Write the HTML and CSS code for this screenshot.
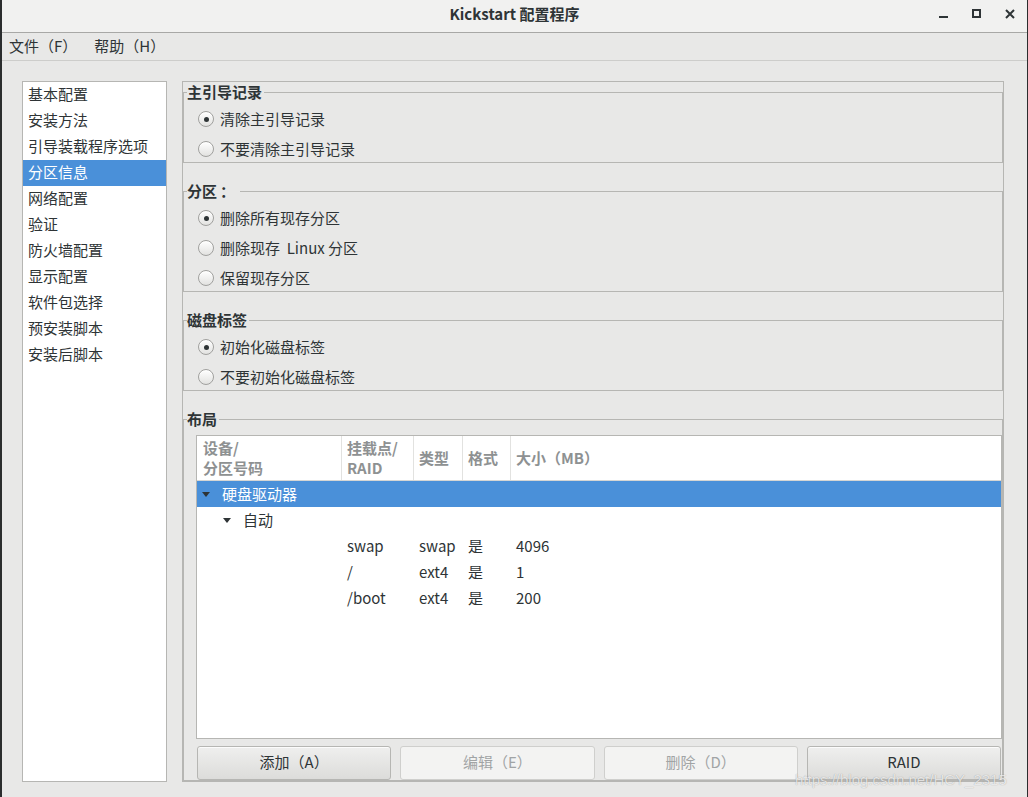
FILE: index.html
```html
<!DOCTYPE html>
<html lang="zh-CN">
<head>
<meta charset="utf-8">
<title>Kickstart 配置程序</title>
<link rel="stylesheet" href="styles.css">
</head>
<body>
<div class="window">
  <header class="titlebar">
    <div class="title">Kickstart 配置程序</div>
    <div class="controls">
      <svg class="ctl min" width="10" height="10" viewBox="0 0 10 10"><rect x="0" y="6" width="9" height="2" fill="#2e3436"/></svg>
      <svg class="ctl max" width="10" height="10" viewBox="0 0 10 10"><rect x="1" y="1" width="7" height="7" fill="none" stroke="#2e3436" stroke-width="2"/></svg>
      <svg class="ctl close" width="10" height="10" viewBox="0 0 10 10"><path d="M1 1 L9 9 M9 1 L1 9" stroke="#2e3436" stroke-width="2"/></svg>
    </div>
  </header>
  <nav class="menubar">
    <span class="menu">文件（F）</span>
    <span class="menu">帮助（H）</span>
  </nav>
  <main class="content">
    <ul class="sidebar">
      <li>基本配置</li>
      <li>安装方法</li>
      <li>引导装载程序选项</li>
      <li class="selected">分区信息</li>
      <li>网络配置</li>
      <li>验证</li>
      <li>防火墙配置</li>
      <li>显示配置</li>
      <li>软件包选择</li>
      <li>预安装脚本</li>
      <li>安装后脚本</li>
    </ul>
    <div class="panel">
      <fieldset class="group">
        <legend>主引导记录</legend>
        <div class="options">
          <label class="option"><span class="radio checked"></span>清除主引导记录</label>
          <label class="option"><span class="radio"></span>不要清除主引导记录</label>
        </div>
      </fieldset>
      <fieldset class="group">
        <legend>分区<span class="colon">：</span></legend>
        <div class="options">
          <label class="option"><span class="radio checked"></span>删除所有现存分区</label>
          <label class="option"><span class="radio"></span>删除现存&nbsp; Linux 分区</label>
          <label class="option"><span class="radio"></span>保留现存分区</label>
        </div>
      </fieldset>
      <fieldset class="group">
        <legend>磁盘标签</legend>
        <div class="options">
          <label class="option"><span class="radio checked"></span>初始化磁盘标签</label>
          <label class="option"><span class="radio"></span>不要初始化磁盘标签</label>
        </div>
      </fieldset>
      <fieldset class="group layout">
        <legend>布局</legend>
        <div class="tree">
          <div class="tree-head">
            <div class="th">设备/<br>分区号码</div>
            <div class="th">挂载点/<br>RAID</div>
            <div class="th">类型</div>
            <div class="th">格式</div>
            <div class="th last">大小（MB）</div>
          </div>
          <div class="tree-row selected">
            <div class="cell first depth0"><span class="expander"></span>硬盘驱动器</div>
          </div>
          <div class="tree-row">
            <div class="cell first depth1"><span class="expander"></span>自动</div>
          </div>
          <div class="tree-row">
            <div class="cell first"></div>
            <div class="cell">swap</div>
            <div class="cell">swap</div>
            <div class="cell">是</div>
            <div class="cell">4096</div>
          </div>
          <div class="tree-row">
            <div class="cell first"></div>
            <div class="cell">/</div>
            <div class="cell">ext4</div>
            <div class="cell">是</div>
            <div class="cell">1</div>
          </div>
          <div class="tree-row">
            <div class="cell first"></div>
            <div class="cell">/boot</div>
            <div class="cell">ext4</div>
            <div class="cell">是</div>
            <div class="cell">200</div>
          </div>
        </div>
        <div class="buttons">
          <button class="btn">添加（A）</button>
          <button class="btn" disabled>编辑（E）</button>
          <button class="btn" disabled>删除（D）</button>
          <button class="btn">RAID</button>
        </div>
      </fieldset>
    </div>
  </main>
  <div class="watermark">https://blog.csdn.net/HCY_2315</div>
</div>
</body>
</html>
```

FILE: styles.css
```css
* { box-sizing: border-box; }

html, body {
  margin: 0;
  padding: 0;
}

body {
  width: 1028px;
  height: 797px;
  overflow: hidden;
  font-family: "Noto Sans CJK SC", "Noto Sans", sans-serif;
  font-size: 15px;
  color: #2e3436;
  background: #e8e8e7;
}

.window {
  position: relative;
  width: 1028px;
  height: 797px;
  border-left: 2px solid #2b2d2e;
  border-right: 1px solid #2b2d2e;
  background: #e8e8e7;
  display: flex;
  flex-direction: column;
}

/* title bar */
.titlebar {
  position: relative;
  height: 33px;
  flex: none;
  background: #f1f1f0;
  border-bottom: 1px solid #a8a8a6;
  display: flex;
  align-items: center;
  justify-content: center;
}

.title {
  font-weight: bold;
  font-size: 15px;
  line-height: 18px;
  margin-top: -4px;
  color: #2e3436;
}

.controls {
  position: absolute;
  right: 0;
  top: 0;
  height: 32px;
}

.ctl {
  position: absolute;
  display: block;
}
.ctl.min { left: -88px; top: 10px; }
.ctl.max { left: -55px; top: 9px; }
.ctl.close { left: -22px; top: 9px; }

/* menu bar */
.menubar {
  height: 28px;
  flex: none;
  border-bottom: 1px solid #cdcdcb;
  display: flex;
  align-items: center;
  gap: 17px;
  padding-left: 7px;
  padding-bottom: 1px;
  line-height: 18px;
}

/* content */
.content {
  flex: 1;
  display: flex;
  gap: 15px;
  padding: 20px 23px 15px 20px;
  min-height: 0;
}

.sidebar {
  width: 145px;
  flex: none;
  margin: 0;
  padding: 0;
  list-style: none;
  background: #ffffff;
  border: 1px solid #b6b6b3;
}

.sidebar li {
  height: 26px;
  line-height: 24px;
  padding-left: 5px;
  white-space: nowrap;
}

.sidebar li.selected {
  background: #4a90d9;
  color: #ffffff;
}

/* right panel */
.panel {
  flex: 1;
  border: 1px solid #b6b6b3;
  display: flex;
  flex-direction: column;
  padding-top: 2px;
  min-width: 0;
}

.group {
  margin: 0;
  padding: 0;
  border: 1px solid #b6b6b3;
  min-width: 0;
  flex: none;
}

.group + .group {
  margin-top: 20px;
}

.group legend {
  font-weight: bold;
  line-height: 16px;
  height: 16px;
  padding: 0 2px 0 0;
  margin-left: 3px;
  color: #2e3436;
}

.colon {
  font-family: "Noto Sans CJK TC", "Noto Sans CJK SC", sans-serif;
  margin-left: 3px;
  margin-right: 3px;
}

.options {
  display: flex;
  flex-direction: column;
  gap: 4px;
  padding: 6px 0 0 14px;
}

.option {
  height: 26px;
  display: flex;
  align-items: center;
  gap: 6px;
  line-height: 18px;
}

.radio {
  width: 16px;
  height: 16px;
  flex: none;
  border-radius: 50%;
  border: 1px solid #a0a09e;
  background: linear-gradient(#ffffff, #e2e2e0);
  box-shadow: inset 0 1px 0 #ffffff;
  position: relative;
}

.radio.checked::after {
  content: "";
  position: absolute;
  left: 4.5px;
  top: 4.5px;
  width: 5px;
  height: 5px;
  border-radius: 50%;
  background: #2e3436;
}

/* layout group */
.group.layout {
  flex: 1;
}

.tree {
  height: 304px;
  margin: 8px 0 0 12px;
  background: #ffffff;
  border: 1px solid #b6b6b3;
  overflow: hidden;
}

.tree-head,
.tree-row {
  display: grid;
  grid-template-columns: 145px 72px 49px 48px 1fr;
}

.tree-head {
  height: 45px;
  border-bottom: 1px solid #d6d6d4;
}

.th {
  border-right: 1px solid #e2e2e0;
  padding-left: 5px;
  display: flex;
  align-items: center;
  font-weight: bold;
  color: #8e9192;
  line-height: 20px;
  white-space: nowrap;
}

.th:first-child { padding-left: 6px; }
.th.last { border-right: none; }

.tree-row {
  height: 26px;
  line-height: 26px;
}

.tree-row.selected {
  background: #4a90d9;
  color: #ffffff;
}

.cell {
  padding-left: 5px;
  white-space: nowrap;
}

.cell.first {
  padding-left: 0;
  display: flex;
  align-items: center;
}

.cell.depth0 { padding-left: 5px; grid-column: 1 / -1; }
.cell.depth1 { padding-left: 26px; grid-column: 1 / -1; }

.expander {
  width: 0;
  height: 0;
  border-left: 4px solid transparent;
  border-right: 4px solid transparent;
  border-top: 5px solid #2e3436;
  margin-right: 12px;
  margin-top: 1px;
}

.buttons {
  display: grid;
  grid-template-columns: repeat(4, 1fr);
  gap: 9px;
  margin: 7px 0 0 12px;
  padding: 0 1px;
}

.btn {
  height: 34px;
  font-family: inherit;
  font-size: 15px;
  line-height: 16px;
  color: #2e3436;
  border: 1px solid #b6b6b3;
  border-radius: 3px;
  background: linear-gradient(#efefee, #dcdcda);
  box-shadow: inset 0 1px 0 rgba(255, 255, 255, 0.8);
  padding: 0 0 3px 0;
}

.btn:disabled {
  color: #a1a4a5;
  background: #f3f3f2;
  border-color: #cfcfcd;
  box-shadow: none;
}

.watermark {
  position: absolute;
  left: 793px;
  top: 772px;
  font-family: "Liberation Sans", sans-serif;
  font-size: 15px;
  line-height: 15px;
  color: rgba(255, 255, 255, 0.75);
  text-shadow: 0 0 1px rgba(0, 0, 0, 0.35);
  white-space: nowrap;
}
```
